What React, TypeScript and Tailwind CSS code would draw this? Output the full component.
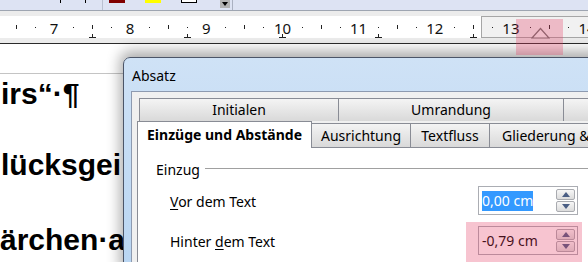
import React from 'react';

const UI = "font-['Noto_Sans','Open_Sans',sans-serif]";

// ruler marks every quarter unit, number every 4th
const quarters = Array.from({ length: 33 }, (_, i) => i - 3);
const tabStops = [0, 1, 2, 3, 4];

function Ruler() {
  return (
    <div className="relative">
      <div className="flex h-[22px]">
        <div className="w-[481px] bg-white" />
        <div className="flex-1 border border-r-0 border-[#a6a6a6] bg-[#f1f1f1]" />
      </div>
      {quarters.map((q) => {
        const x = 54 + 19.04 * q;
        const kind = ((q % 4) + 4) % 4;
        if (kind === 0) {
          return (
            <span
              key={q}
              className={`absolute top-[3px] -translate-x-1/2 text-[15px] leading-[18px] text-[#111] ${UI}`}
              style={{ left: x }}
            >
              {7 + q / 4}
            </span>
          );
        }
        if (kind === 2) {
          return <div key={q} className="absolute top-[9px] h-[4px] w-px bg-[#222]" style={{ left: x }} />;
        }
        return <div key={q} className="absolute top-[11px] h-px w-px bg-[#222]" style={{ left: x }} />;
      })}
      {tabStops.map((i) => {
        const x = 54 + 76.15 * (0.5 + 1.25 * i);
        return (
          <div key={i} className="absolute top-[18px]" style={{ left: x - 3 }}>
            <div className="ml-[3px] h-[3px] w-px bg-[#222]" />
            <div className="h-px w-[7px] bg-[#222]" />
          </div>
        );
      })}
      {/* indent marker */}
      <svg className="absolute left-[531px] top-[11px]" width="19" height="12" viewBox="0 0 19 12">
        <path d="M1 11 L9.5 1.5 L18 11 Z" fill="#f4f4f4" stroke="#707070" strokeWidth="1.2" />
      </svg>
    </div>
  );
}

function Toolbar() {
  return (
    <div className="flex h-[10px] items-start bg-[#dde3f3]">
      <div className="ml-[60px] h-[3px] w-px bg-black" />
      <div className="ml-[24px] h-[3px] w-px bg-black" />
      <div className="ml-[16px] h-[10px] w-px bg-[#b9c0d0]" />
      <div className="ml-[6px] h-[3px] w-[16px] bg-[#800000]" />
      <div className="ml-[20px] h-[3px] w-[16px] bg-[#ffff00]" />
      <div className="ml-[20px] h-[3px] w-[16px] border-x border-b border-black bg-white" />
      <div className="ml-[23px] flex h-[8px] w-[10px] items-center justify-center bg-[#b3b3b3]">
        <svg width="6" height="4" viewBox="0 0 6 4">
          <path d="M0 0 H6 L3 4 Z" fill="#000" />
        </svg>
      </div>
      <div className="ml-[2px] h-[10px] w-px bg-[#aab1c1]" />
    </div>
  );
}

function Spin({ up }: { up: boolean }) {
  return (
    <div className="flex h-[11px] w-[19px] items-center justify-center rounded-[2px] border border-[#a9abb0] bg-gradient-to-b from-[#f7f7f7] to-[#dcdcdc]">
      <svg width="8" height="5" viewBox="0 0 8 5">
        <path d={up ? 'M0 5 L4 0 L8 5 Z' : 'M0 0 L4 5 L8 0 Z'} fill="#4a5e84" />
      </svg>
    </div>
  );
}

function Field({ value, selected }: { value: string; selected?: boolean }) {
  return (
    <div className="flex h-[29px] w-[100px] shrink-0 items-center border border-[#abadb3] bg-white pl-[3px] pr-[2px]">
      <span className={selected ? 'bg-[#3399ff] leading-[20px] text-white' : 'leading-[20px] text-black'}>
        {value}
      </span>
      <div className="ml-auto flex flex-col gap-[1px]">
        <Spin up />
        <Spin up={false} />
      </div>
    </div>
  );
}

const backTab =
  'flex shrink-0 items-center justify-center whitespace-nowrap border-t border-l border-[#898c95] bg-gradient-to-b from-[#f4f4f4] to-[#d9d9d9] text-[14px] leading-[20px] text-black';

function Dialog() {
  return (
    <div
      className={`absolute left-[123px] top-[57px] h-[215px] w-[480px] rounded-t-[7px] border border-[#4b5568] bg-gradient-to-b from-[#cfe2f6] to-[#b8d5f2] shadow-[0_-3px_14px_3px_rgba(0,0,0,0.33)] ${UI}`}
    >
      <div className="h-[33px] pl-[8px] pt-[8px] text-[14px] leading-[20px] text-black">Absatz</div>
      <div className="ml-[7px] h-full border-l border-t border-[#8d9ab0] bg-[#f0f0f0] pl-[5px] pt-[6px]">
        <div className="ml-[2px] flex h-[23px]">
          <div className={`${backTab} w-[199px]`}>Initialen</div>
          <div className={`${backTab} w-[225px]`}>Umrandung</div>
          <div className={`${backTab} w-[60px] border-r`} />
        </div>
        <div className="flex h-[26px] items-end">
          <div className="relative z-10 -mb-px flex h-[27px] w-[175px] shrink-0 items-center justify-center whitespace-nowrap border-x border-t border-[#898c95] bg-white text-[14px] font-bold leading-[20px] text-black">
            Einzüge und Abstände
          </div>
          <div className={`${backTab} h-[24px] w-[99px] border-l-0 border-r`}>Ausrichtung</div>
          <div className={`${backTab} h-[24px] w-[79px] border-l-0 border-r`}>Textfluss</div>
          <div className={`${backTab} h-[24px] w-[190px] justify-start overflow-hidden border-l-0 border-r pl-[12px]`}>
            Gliederung &amp; Nummerierung
          </div>
        </div>
        <div className="h-[200px] border-l border-t border-[#898c95] bg-white pl-[18px] pt-[12px] text-[14px] leading-[20px] text-black">
          <div className="flex items-center gap-[5px]">
            <span>Einzug</span>
            <div className="mb-[3px] h-px flex-1 bg-[#a0a0a0]" />
          </div>
          <div className="mt-[6px] flex items-center pl-[14px]">
            <span className="w-[308px] shrink-0 pt-[2px]">
              <span className="underline underline-offset-2">V</span>or dem Text
            </span>
            <Field value="0,00 cm" selected />
          </div>
          <div className="mt-[11px] flex items-center pl-[14px]">
            <span className="w-[308px] shrink-0 pt-[2px]">
              Hinter <span className="underline underline-offset-2">d</span>em Text
            </span>
            <Field value="-0,79 cm" />
          </div>
        </div>
      </div>
    </div>
  );
}

export default function App() {
  return (
    <div className="relative h-[262px] w-[588px] overflow-hidden bg-white">
      <Toolbar />
      <div className="h-px bg-[#9ea5b1]" />
      <div className="h-[5px] bg-[#ececec]" />
      <Ruler />
      <div className="h-[5px] bg-[#ececec]" />
      <div className="h-px bg-[#2b2b2b]" />

      {/* document page */}
      <div className="font-['Liberation_Sans',Arial,sans-serif] text-[30px] font-bold text-black">
        <div className="h-[29px]" />
        <div className="h-px bg-[#c4c4c4]" />
        <div className="mt-[5px] h-[30px] whitespace-nowrap pl-[1px] leading-[30px]">irs“·¶</div>
        <div className="mt-[41px] h-[30px] whitespace-nowrap pl-[1px] leading-[30px]">lücksgei</div>
        <div className="mt-[45px] h-[30px] whitespace-nowrap leading-[30px]">ärchen·a</div>
      </div>

      <Dialog />

      {/* highlight marks */}
      <div className="absolute left-[516px] top-[19px] h-[36px] w-[47px] bg-[rgba(228,60,100,0.3)]" />
      <div className="absolute left-[466px] top-[222px] h-[40px] w-[116px] bg-[rgba(228,60,100,0.3)]" />
    </div>
  );
}
